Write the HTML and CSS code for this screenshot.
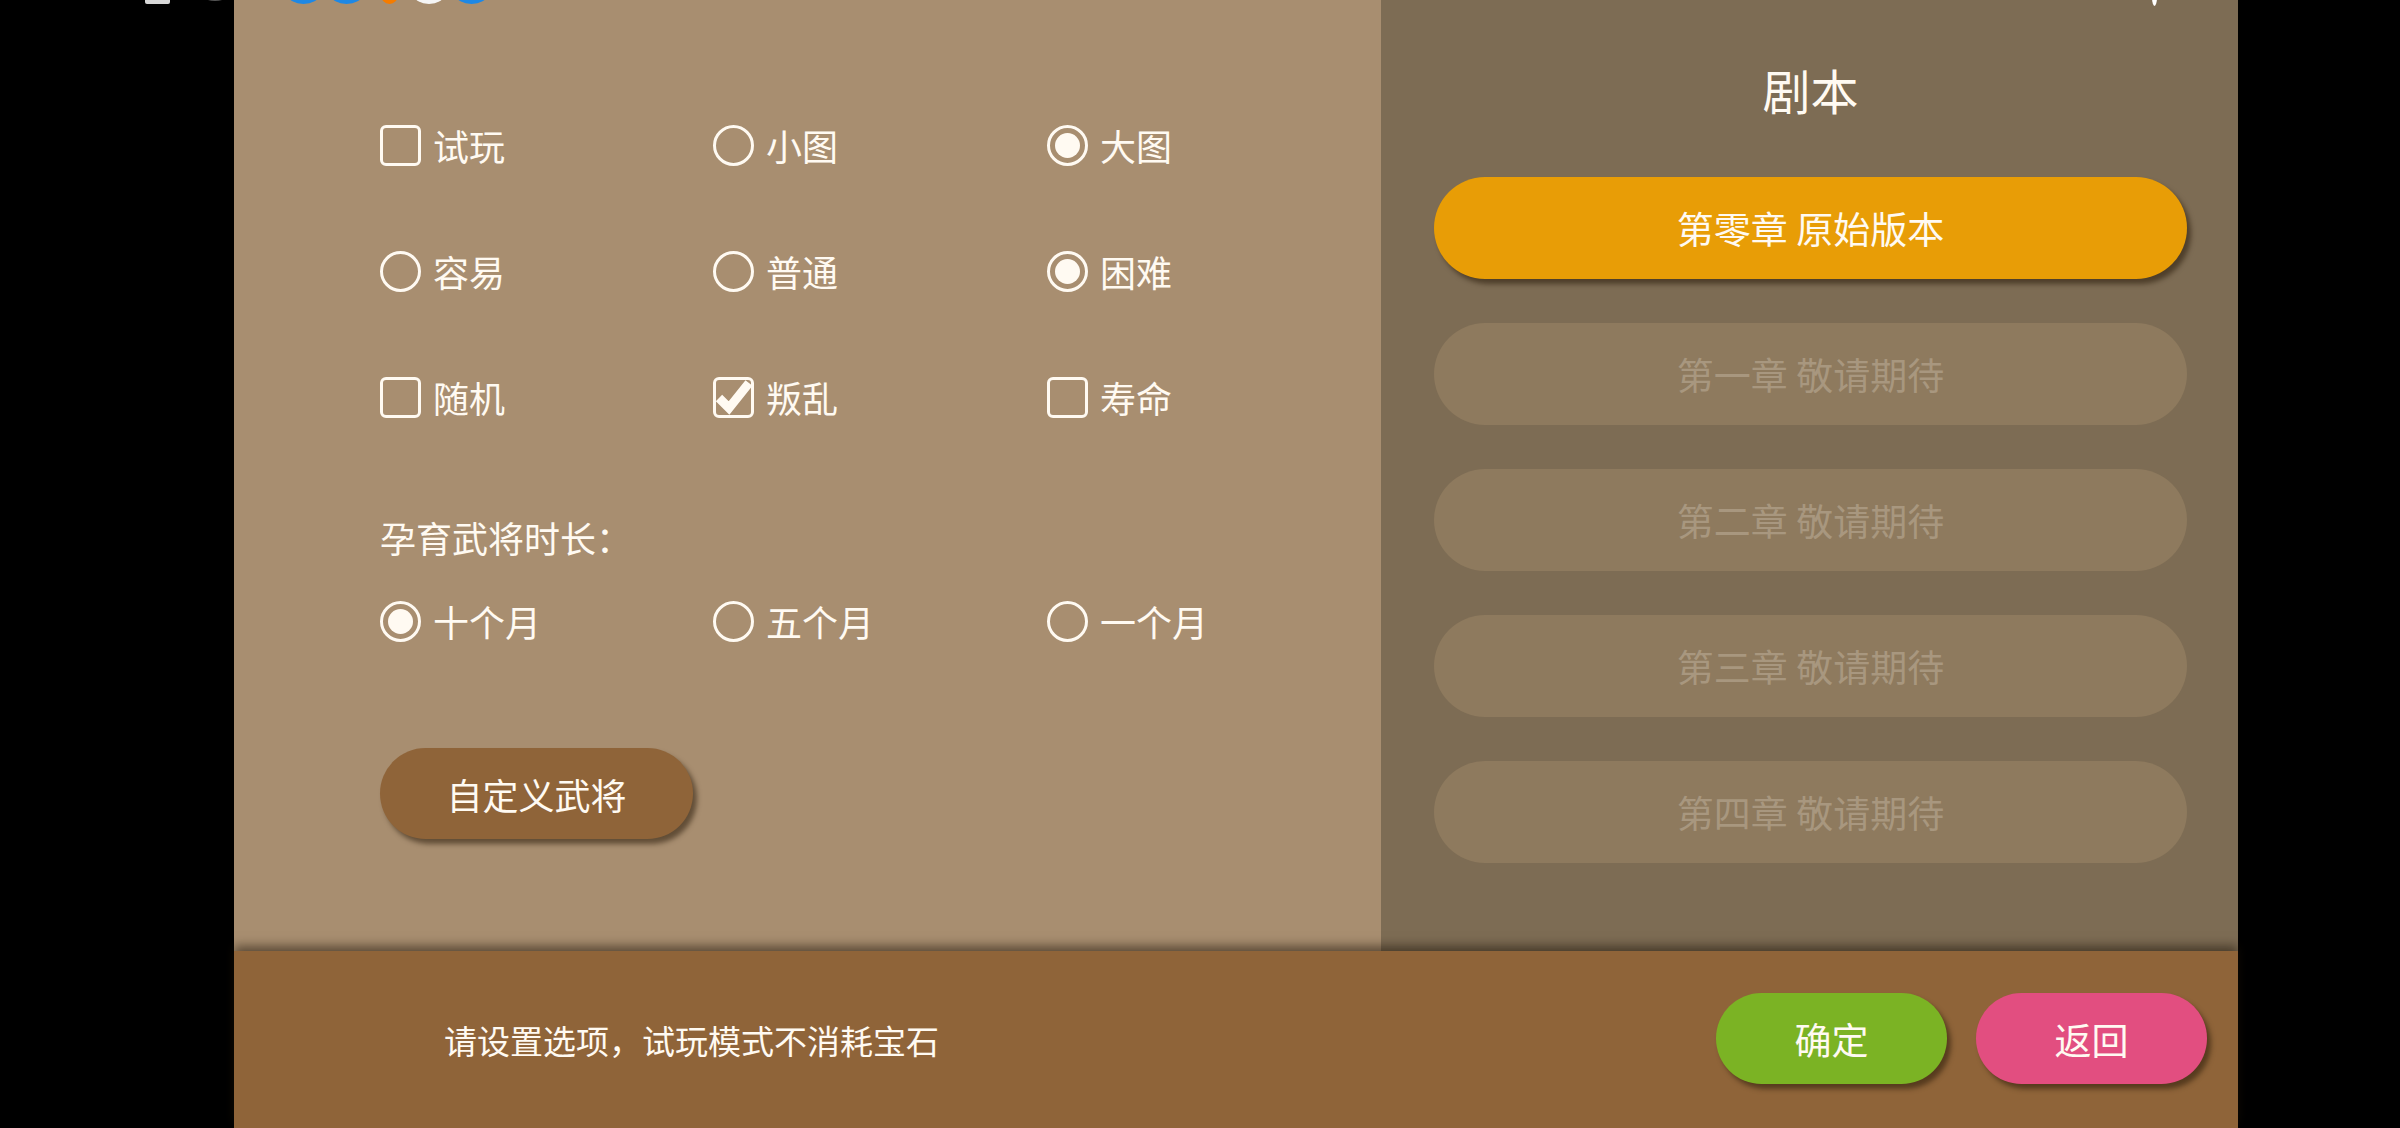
FILE: index.html
```html
<!DOCTYPE html>
<html lang="zh-CN">
<head>
    <meta charset="UTF-8">
    <meta name="viewport" content="width=device-width, initial-scale=1.0">
    <title>新游戏设置</title>
    <link rel="stylesheet" href="styles.css">
</head>
<body>
    <div class="status-icons">
        <span class="st st-a"></span>
        <span class="st st-dots"></span>
        <span class="st st-blue st-1"></span>
        <span class="st st-blue st-2"></span>
        <span class="st st-orange"></span>
        <span class="st st-white"></span>
        <span class="st st-blue st-3"></span>
        <span class="st st-right"></span>
    </div>

    <div class="screen">
        <div class="main">
            <div class="options">
                <div class="option-row">
                    <label class="opt"><span class="box"></span>试玩</label>
                    <label class="opt"><span class="radio"></span>小图</label>
                    <label class="opt"><span class="radio on"></span>大图</label>
                </div>
                <div class="option-row">
                    <label class="opt"><span class="radio"></span>容易</label>
                    <label class="opt"><span class="radio"></span>普通</label>
                    <label class="opt"><span class="radio on"></span>困难</label>
                </div>
                <div class="option-row">
                    <label class="opt"><span class="box"></span>随机</label>
                    <label class="opt">
                        <span class="box checked">
                            <svg class="tick" viewBox="0 0 40 40" width="40" height="40"><path d="M4 21 L14 31 L34 6" fill="none" stroke="#fffaf2" stroke-width="9" stroke-linejoin="miter" stroke-linecap="butt"/></svg>
                        </span>叛乱
                    </label>
                    <label class="opt"><span class="box"></span>寿命</label>
                </div>

                <p class="group-title">孕育武将时长：</p>
                <div class="option-row months">
                    <label class="opt"><span class="radio on"></span>十个月</label>
                    <label class="opt"><span class="radio"></span>五个月</label>
                    <label class="opt"><span class="radio"></span>一个月</label>
                </div>

                <button class="btn btn-custom">自定义武将</button>
            </div>

            <div class="scripts">
                <h2>剧本</h2>
                <button class="chapter active">第零章 原始版本</button>
                <button class="chapter">第一章 敬请期待</button>
                <button class="chapter">第二章 敬请期待</button>
                <button class="chapter">第三章 敬请期待</button>
                <button class="chapter">第四章 敬请期待</button>
            </div>
        </div>

        <div class="footer">
            <p class="tip">请设置选项，试玩模式不消耗宝石</p>
            <div class="actions">
                <button class="btn btn-ok">确定</button>
                <button class="btn btn-back">返回</button>
            </div>
        </div>
    </div>
</body>
</html>
```

FILE: styles.css
```css
body {
    margin: 0;
    background: #000000;
    font-family: "Noto Sans CJK SC", "Noto Sans", sans-serif;
    color: #fffaf2;
    overflow: hidden;
}

.screen {
    width: 2004px;
    height: 1128px;
    margin-left: 234px;
    display: flex;
    flex-direction: column;
}

.main {
    display: flex;
    height: 951px;
}

/* left side: game options */
.options {
    width: 1147px;
    background: #a88e70;
    padding: 124px 0 0 146px;
    box-sizing: border-box;
}

.option-row {
    display: grid;
    grid-template-columns: 333px 334px 300px;
    height: 42px;
    margin-bottom: 84px;
}

.opt {
    display: flex;
    align-items: center;
    gap: 12px;
    font-size: 36px;
    line-height: 42px;
}

.box {
    position: relative;
    width: 41px;
    height: 41px;
    box-sizing: border-box;
    border: 3px solid #fffaf2;
    border-radius: 6px;
}

.tick {
    position: absolute;
    left: -1px;
    top: -3px;
}

.radio {
    width: 41px;
    height: 41px;
    box-sizing: border-box;
    border: 3px solid #fffaf2;
    border-radius: 50%;
    display: flex;
    align-items: center;
    justify-content: center;
}

.radio.on::after {
    content: "";
    width: 25px;
    height: 25px;
    border-radius: 50%;
    background: #fffaf2;
}

.group-title {
    font-size: 36px;
    line-height: 42px;
    margin: 98px 0 42px;
}

.option-row.months {
    margin-bottom: 106px;
}

.btn {
    font-family: inherit;
    color: #fffaf2;
    border: none;
    border-radius: 46px;
    box-shadow: 4px 5px 5px rgba(40, 25, 10, 0.55);
    cursor: pointer;
}

.btn-custom {
    width: 313px;
    height: 91px;
    font-size: 36px;
    background: #8f6439;
}

/* right side: chapters */
.scripts {
    width: 857px;
    background: #7d6c54;
    padding: 0 51px 0 53px;
    box-sizing: border-box;
    display: flex;
    flex-direction: column;
}

.scripts h2 {
    margin: 57px 0 56px;
    text-align: center;
    font-size: 48px;
    font-weight: normal;
    line-height: 64px;
}

.chapter {
    height: 102px;
    margin-bottom: 44px;
    border: none;
    border-radius: 51px;
    font-family: inherit;
    font-size: 37px;
    background: #8e7a5e;
    color: #a8977f;
}

.chapter.active {
    background: #e89d06;
    color: #fffaf2;
    box-shadow: 4px 5px 5px rgba(40, 25, 10, 0.55);
}

/* bottom bar */
.footer {
    flex: 1;
    background: #8f6439;
    display: flex;
    align-items: center;
    justify-content: space-between;
    padding: 0 31px 0 210px;
    box-shadow: 0 -5px 10px rgba(30, 20, 10, 0.55);
}

.tip {
    margin: 0;
    font-size: 33px;
}

.actions {
    display: flex;
    gap: 29px;
    margin-top: -2px;
}

.btn-ok,
.btn-back {
    width: 231px;
    height: 91px;
    font-size: 37px;
}

.btn-ok {
    background: #7bb324;
}

.btn-back {
    background: #e24e80;
}

/* clipped status bar icons along the top edge */
.status-icons .st {
    position: absolute;
    top: -14px;
    height: 18px;
    border-radius: 50%;
}

.st-a {
    left: 145px;
    width: 25px;
    background: #d8d8d8;
    border-radius: 2px !important;
}

.st-dots {
    left: 201px;
    width: 28px;
    background: #555555;
    height: 15px !important;
}

.st-blue {
    width: 31px;
    background: #1e88e5;
}

.st-1 { left: 288px; }
.st-2 { left: 331px; }
.st-3 { left: 456px; }

.st-orange {
    left: 381px;
    width: 17px;
    background: #f57c00;
}

.st-white {
    left: 414px;
    width: 30px;
    background: #f5f5f5;
}

.st-right {
    left: 2152px;
    width: 5px;
    background: #ffffff;
    top: -12px !important;
}
```
